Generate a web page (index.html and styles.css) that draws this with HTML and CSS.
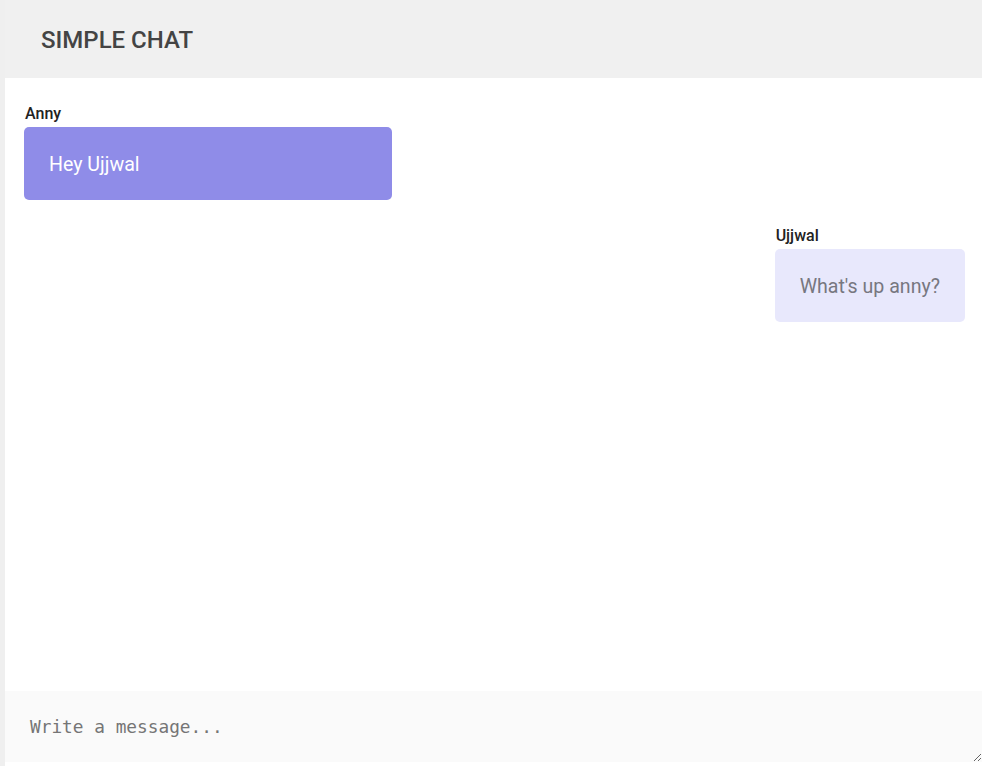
FILE: index.html
```html
<!DOCTYPE html>
<html>
<head>
<meta charset="utf-8">
<link rel="stylesheet" href="styles.css">
</head>
<body>
<div class="chat">
  <header class="chat-header">
    <h1 class="chat-title">SIMPLE CHAT</h1>
  </header>
  <main class="messages">
    <div class="message left">
      <div class="sender">Anny</div>
      <div class="bubble bubble-primary">Hey Ujjwal</div>
    </div>
    <div class="message right">
      <div class="sender">Ujjwal</div>
      <div class="bubble bubble-light">What's up anny?</div>
    </div>
  </main>
  <textarea class="composer" placeholder="Write a message..."></textarea>
</div>
</body>
</html>
```
FILE: styles.css
```css
html, body {
  margin: 0;
  padding: 0;
  height: 100%;
}
body {
  background: #efefef;
  font-family: Roboto, "Noto Sans", sans-serif;
  overflow: hidden;
}
.chat {
  margin-left: 5px;
  height: 100vh;
  background: #ffffff;
  display: flex;
  flex-direction: column;
}
.chat-header {
  height: 78px;
  flex: none;
  box-sizing: border-box;
  background: #f0f0f0;
  display: flex;
  align-items: center;
  padding-left: 36px;
  padding-top: 2px;
}
.chat-title {
  margin: 0;
  font-size: 24px;
  font-weight: 500;
  color: #444444;
}
.messages {
  flex: 1;
  padding: 26px 17px 0 19px;
  display: flex;
  flex-direction: column;
}
.message {
  display: flex;
  flex-direction: column;
  margin-bottom: 26px;
}
.message.right {
  align-self: flex-end;
}
.message.left {
  align-self: flex-start;
}
.sender {
  font-size: 16px;
  font-weight: 500;
  color: #222222;
  padding-left: 1px;
  margin-bottom: 4px;
}
.bubble {
  font-size: 19.6px;
  line-height: 23px;
  padding: 26px 25px 24px 25px;
  border-radius: 5px;
}
.bubble-primary {
  min-width: 318px;
  background: #8f8ce8;
  color: #ffffff;
}
.bubble-light {
  background: #e8e8fc;
  color: #777780;
}
.composer {
  flex: none;
  height: 71px;
  margin: 0 0 4px 0;
  box-sizing: border-box;
  border: none;
  outline: none;
  background: #fafafa;
  padding: 25px 25px 10px 25px;
  font-family: "DejaVu Sans Mono", monospace;
  font-size: 17.8px;
  color: #444;
  resize: vertical;
  width: 100%;
  display: block;
}
.composer::placeholder {
  color: #757575;
}
```
